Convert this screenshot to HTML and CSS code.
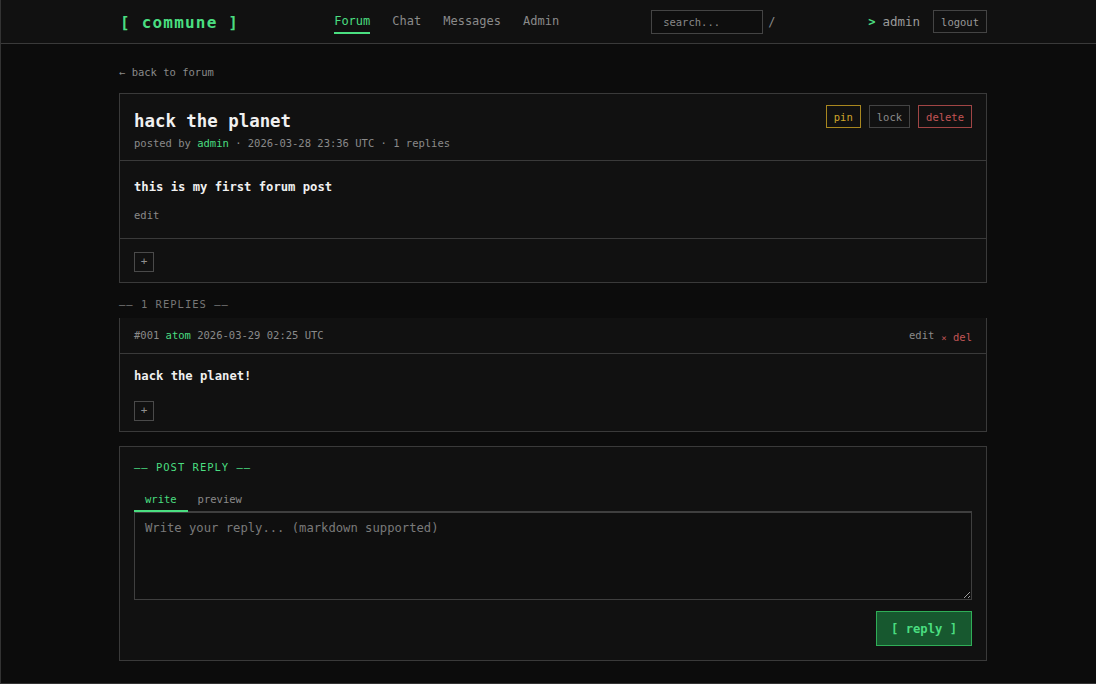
FILE: index.html
```html
<!DOCTYPE html>
<html lang="en">
<head>
<meta charset="utf-8">
<title>hack the planet - commune</title>
<link rel="stylesheet" href="styles.css">
</head>
<body>
<div class="frame">
  <header class="topbar">
    <div class="wrap topbar-inner">
      <a class="logo" href="#">[ commune ]</a>
      <nav class="nav">
        <a class="nav-link active" href="#">Forum</a>
        <a class="nav-link" href="#">Chat</a>
        <a class="nav-link" href="#">Messages</a>
        <a class="nav-link" href="#">Admin</a>
      </nav>
      <div class="search">
        <input class="search-input" type="text" placeholder="search...">
        <span class="search-key">/</span>
      </div>
      <div class="user">
        <span class="prompt">&gt;</span>
        <span class="username">admin</span>
        <button class="btn-logout">logout</button>
      </div>
    </div>
  </header>

  <main class="wrap main">
    <a class="back" href="#">← back to forum</a>

    <article class="card post">
      <div class="post-head">
        <div class="post-titles">
          <h1 class="post-title">hack the planet</h1>
          <div class="meta">posted by <span class="author">admin</span> · 2026-03-28 23:36 UTC · 1 replies</div>
        </div>
        <div class="mod-actions">
          <button class="tag tag-pin">pin</button>
          <button class="tag tag-lock">lock</button>
          <button class="tag tag-delete">delete</button>
        </div>
      </div>
      <div class="post-body">
        <p class="body-text">this is my first forum post</p>
        <a class="small-link" href="#">edit</a>
      </div>
      <div class="reactions">
        <button class="react-add">+</button>
      </div>
    </article>

    <div class="section-label">—— 1 REPLIES ——</div>

    <article class="card reply">
      <div class="reply-head">
        <div class="reply-meta">#001 <span class="author">atom</span> 2026-03-29 02:25 UTC</div>
        <div class="reply-actions">
          <a class="small-link" href="#">edit</a>
          <a class="del-link" href="#"><span class="x">×</span> del</a>
        </div>
      </div>
      <div class="reply-body">
        <p class="body-text">hack the planet!</p>
        <div class="reply-react">
          <button class="react-add">+</button>
        </div>
      </div>
    </article>

    <section class="card compose">
      <div class="section-label green">—— POST REPLY ——</div>
      <div class="tabs">
        <button class="tab active">write</button>
        <button class="tab">preview</button>
      </div>
      <textarea class="editor" placeholder="Write your reply... (markdown supported)"></textarea>
      <div class="compose-actions">
        <button class="btn-reply">[ reply ]</button>
      </div>
    </section>
  </main>
</div>
</body>
</html>
```

FILE: styles.css
```css
* { box-sizing: border-box; }

html, body {
  margin: 0;
  padding: 0;
  background: #0c0c0c;
}

body {
  font-family: "DejaVu Sans Mono", "Liberation Mono", monospace;
  color: #e6e6e6;
}

.frame {
  height: 684px;
  border-left: 1px solid #333;
  border-bottom: 1px solid #333;
  padding-left: 9px;
  overflow: hidden;
}

.wrap {
  width: 868px;
  margin: 0 auto;
}

a { text-decoration: none; color: inherit; }
button { font-family: inherit; cursor: pointer; }

/* ---------- top bar ---------- */
.topbar {
  background: #111;
  border-bottom: 1px solid #3a3a3a;
  margin-left: -9px;
  padding-left: 9px;
}

.topbar-inner {
  height: 43px;
  display: flex;
  align-items: center;
}

.logo {
  color: #4ade80;
  font-weight: bold;
  font-size: 16px;
  letter-spacing: 1.2px;
  margin-left: 1px;
  padding-top: 1px;
}

.nav {
  display: flex;
  gap: 22px;
  margin-left: 95px;
}

.nav-link {
  font-size: 12px;
  color: #8a8a8a;
  line-height: 16px;
  padding: 4px 0 3px;
  border-bottom: 2px solid transparent;
}

.nav-link.active {
  color: #4ade80;
  border-bottom-color: #4ade80;
}

.search {
  display: flex;
  align-items: center;
  margin-left: 92px;
}

.search-input {
  width: 112px;
  height: 24px;
  background: #0e0e0e;
  border: 1px solid #444;
  color: #ccc;
  font-family: inherit;
  font-size: 10.5px;
  padding: 0 11px;
  outline: none;
}

.search-input::placeholder { color: #888; }

.search-key {
  color: #888;
  font-size: 12px;
  margin-left: 5px;
}

.user {
  margin-left: auto;
  display: flex;
  align-items: center;
}

.prompt {
  color: #4ade80;
  font-size: 12px;
  font-weight: bold;
}

.username {
  color: #9a9a9a;
  font-size: 12.5px;
  margin-left: 7px;
}

.btn-logout {
  margin-left: 13px;
  height: 23px;
  padding: 0 7px;
  background: transparent;
  border: 1px solid #444;
  color: #999;
  font-size: 10.5px;
}

/* ---------- main ---------- */
.main {
  padding-top: 20px;
}

.back {
  display: block;
  font-size: 10.5px;
  line-height: 16px;
  color: #8a8a8a;
  margin-bottom: 13px;
}

.card {
  background: #111;
  border: 1px solid #3a3a3a;
}

.post-head {
  display: flex;
  justify-content: space-between;
  align-items: flex-start;
  padding: 11px 14px 10px;
  border-bottom: 1px solid #3a3a3a;
}

.post-titles { padding-top: 5px; }

.post-title {
  margin: 0;
  font-size: 17.4px;
  line-height: 22px;
  font-weight: bold;
  color: #f0f0f0;
}

.meta {
  margin-top: 4px;
  font-size: 10.5px;
  line-height: 14px;
  color: #8a8a8a;
}

.author { color: #4ade80; }

.mod-actions {
  display: flex;
  gap: 8px;
}

.tag {
  height: 23px;
  padding: 0 7px;
  background: transparent;
  font-size: 10.5px;
  border: 1px solid #444;
  color: #888;
}

.tag-pin { color: #cfa42a; border-color: #a8871f; }
.tag-lock { color: #8a8a8a; border-color: #444; }
.tag-delete { color: #c25555; border-color: #a04545; }

.post-body {
  padding: 17px 14px 15px;
  border-bottom: 1px solid #3a3a3a;
}

.body-text {
  margin: 0;
  font-size: 12.2px;
  line-height: 18px;
  font-weight: 600;
  color: #f0f0f0;
}

.small-link {
  display: inline-block;
  font-size: 10.5px;
  line-height: 14px;
  color: #8a8a8a;
}

.post-body .small-link { margin-top: 12px; }

.reactions {
  padding: 13px 14px 10px;
}

.react-add {
  display: block;
  width: 20px;
  height: 20px;
  padding: 0;
  background: transparent;
  border: 1px solid #4a4a4a;
  color: #8f8f8f;
  font-size: 11px;
  line-height: 18px;
}

.section-label {
  font-size: 10.5px;
  line-height: 14px;
  letter-spacing: 1px;
  color: #777;
  margin: 14px 0 7px;
}

.section-label.green {
  color: #4ade80;
  margin: 0;
}

/* ---------- reply ---------- */
.reply {
  border-top: none;
}

.reply-head {
  display: flex;
  justify-content: space-between;
  align-items: flex-start;
  height: 36px;
  padding: 10px 14px 0;
  border-bottom: 1px solid #3a3a3a;
}

.reply-meta {
  font-size: 10.5px;
  line-height: 14px;
  color: #8a8a8a;
}

.reply-actions {
  display: flex;
  align-items: flex-start;
  gap: 7px;
}

.del-link {
  font-size: 10.5px;
  line-height: 14px;
  color: #c25555;
  margin-top: 2px;
}

.del-link .x { font-size: 9px; }

.reply-body {
  padding: 13px 14px 10px;
}

.reply-react { margin-top: 16px; }

/* ---------- compose ---------- */
.compose {
  margin-top: 14px;
  padding: 13px 14px 14px;
}

.tabs {
  display: flex;
  margin-top: 12px;
}

.tab {
  background: transparent;
  border: none;
  border-bottom: 2px solid transparent;
  padding: 6px 11px 4px;
  font-size: 10.5px;
  line-height: 14px;
  color: #8a8a8a;
}

.tab.active {
  color: #4ade80;
  border-bottom-color: #4ade80;
}

.tab + .tab { padding-left: 10px; }

.editor {
  display: block;
  width: 100%;
  height: 89px;
  margin-top: -1px;
  background: #0f0f0f;
  border: 1px solid #3f3f3f;
  border-top-width: 2px;
  color: #ddd;
  font-family: inherit;
  font-size: 12.2px;
  line-height: 16px;
  padding: 7px 10px;
  resize: vertical;
  outline: none;
}

.editor::placeholder { color: #7a7a7a; }

.compose-actions {
  display: flex;
  justify-content: flex-end;
  margin-top: 11px;
}

.btn-reply {
  height: 35px;
  width: 96px;
  background: #17582f;
  border: 1px solid #2fae57;
  color: #4ade80;
  font-size: 12.2px;
  font-weight: bold;
}
```
